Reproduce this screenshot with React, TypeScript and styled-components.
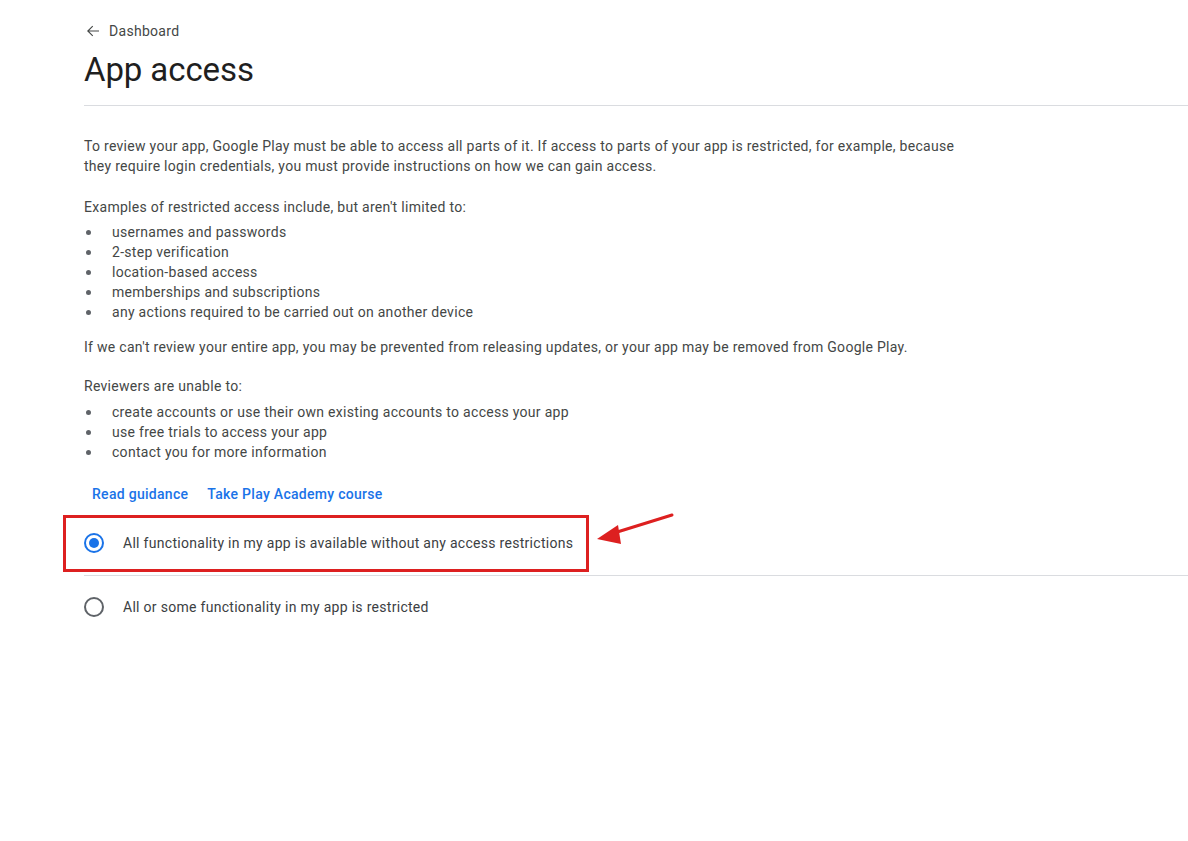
import React from "react";
import styled, { createGlobalStyle } from "styled-components";

const Global = createGlobalStyle`
  html, body { margin: 0; padding: 0; background: #fff; }
  body { font-family: Roboto, "Noto Sans", Arial, sans-serif; color: #444746; -webkit-font-smoothing: antialiased; letter-spacing: 0.29px; }
  * { box-sizing: border-box; }
`;

const Page = styled.div`
  padding: 20px 0 0 84px;
  width: 1188px;
  height: 841px;
  overflow: hidden;
`;

const Back = styled.a`
  display: flex;
  align-items: center;
  gap: 7px;
  height: 22px;
  font-size: 14px;
  color: #444746;
  text-decoration: none;
  padding-left: 0;
`;

const Title = styled.h1`
  margin: 8px 0 0;
  font-size: 33px;
  font-weight: 400;
  line-height: 40px;
  color: #1f1f1f;
  letter-spacing: -0.1px;
`;

const Divider = styled.hr<{ $top: number }>`
  border: none;
  border-top: 1px solid #dadce0;
  margin: ${(p) => p.$top}px 0 0;
`;

const Body = styled.div`
  width: 900px;
  font-size: 14px;
  line-height: 20px;
`;

const Para = styled.p<{ $top: number }>`
  margin: ${(p) => p.$top}px 0 0;
`;

const List = styled.ul<{ $top: number }>`
  margin: ${(p) => p.$top}px 0 0;
  padding: 0;
  list-style: none;
`;

const Item = styled.li`
  display: flex;
  align-items: center;
  height: 20px;
  &::before {
    content: "";
    width: 5px;
    height: 5px;
    border-radius: 50%;
    background: #5f6368;
    margin: 0 21px 0 2px;
    flex: none;
  }
`;

const Links = styled.div`
  display: flex;
  gap: 19px;
  margin: 22px 0 0 8px;
`;

const LinkText = styled.a`
  font-size: 14px;
  line-height: 20px;
  font-weight: 500;
  color: #1a73e8;
  text-decoration: none;
`;

const Options = styled.div`
  margin-top: 7px;
  position: relative;
`;

const OptionRow = styled.label<{ $h: number }>`
  display: flex;
  align-items: center;
  gap: 19px;
  height: ${(p) => p.$h}px;
  font-size: 14px;
  color: #3c4043;
`;

const Radio = styled.span<{ $checked?: boolean }>`
  width: 20px;
  height: 20px;
  border-radius: 50%;
  border: 2px solid ${(p) => (p.$checked ? "#1a73e8" : "#5f6368")};
  display: flex;
  align-items: center;
  justify-content: center;
  &::after {
    content: "";
    width: 10px;
    height: 10px;
    border-radius: 50%;
    background: ${(p) => (p.$checked ? "#1a73e8" : "transparent")};
  }
`;

const RowDivider = styled.div`
  border-top: 1px solid #dadce0;
`;

const Highlight = styled.div`
  position: absolute;
  left: -21px;
  top: 4px;
  width: 526px;
  height: 57px;
  border: 3px solid #dd2020;
  pointer-events: none;
`;

const Arrow = styled.svg`
  position: absolute;
  left: 510px;
  top: 1px;
  overflow: visible;
`;

export default function App() {
  return (
    <>
      <Global />
      <Page>
        <Back href="#">
          <svg width="18" height="18" viewBox="0 0 24 24">
            <path d="M20 11.25H6.9l5.3-5.3-1.06-1.06L4 12l7.14 7.11 1.06-1.06-5.3-5.3H20z" fill="#444746" />
          </svg>
          Dashboard
        </Back>
        <Title>App access</Title>
        <Divider $top={15} />
        <Body>
          <Para $top={30}>
            To review your app, Google Play must be able to access all parts of it. If access to parts of your app is restricted, for example, because they require login credentials, you must provide instructions on how we can gain access.
          </Para>
          <Para $top={21}>Examples of restricted access include, but aren't limited to:</Para>
          <List $top={5}>
            <Item>usernames and passwords</Item>
            <Item>2-step verification</Item>
            <Item>location-based access</Item>
            <Item>memberships and subscriptions</Item>
            <Item>any actions required to be carried out on another device</Item>
          </List>
          <Para $top={15}>
            If we can't review your entire app, you may be prevented from releasing updates, or your app may be removed from Google Play.
          </Para>
          <Para $top={19}>Reviewers are unable to:</Para>
          <List $top={6}>
            <Item>create accounts or use their own existing accounts to access your app</Item>
            <Item>use free trials to access your app</Item>
            <Item>contact you for more information</Item>
          </List>
        </Body>
        <Links>
          <LinkText href="#">Read guidance</LinkText>
          <LinkText href="#">Take Play Academy course</LinkText>
        </Links>
        <Options>
          <OptionRow $h={64}>
            <Radio $checked />
            All functionality in my app is available without any access restrictions
          </OptionRow>
          <RowDivider />
          <OptionRow $h={62}>
            <Radio />
            All or some functionality in my app is restricted
          </OptionRow>
          <Highlight />
          <Arrow width="80" height="40" viewBox="0 0 80 40">
            <line x1="78" y1="3" x2="20" y2="21" stroke="#dd2020" strokeWidth="3" strokeLinecap="round" />
            <polygon points="3,27 24,13 27,32" fill="#dd2020" />
          </Arrow>
        </Options>
      </Page>
    </>
  );
}
